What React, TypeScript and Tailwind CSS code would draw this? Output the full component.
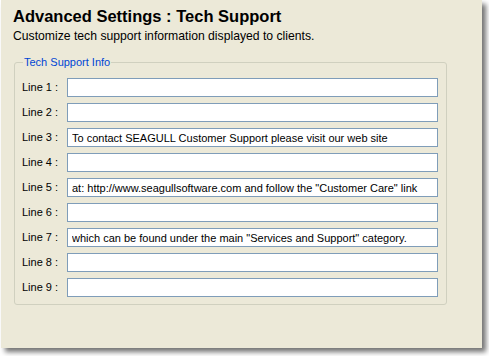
const lines = [
  "",
  "",
  "To contact SEAGULL Customer Support please visit our web site",
  "",
  'at: http://www.seagullsoftware.com and follow the "Customer Care" link',
  "",
  'which can be found under the main "Services and Support" category.',
  "",
  "",
];

export default function App() {
  return (
    <div className="w-[489px] h-[356px] bg-white">
      <div className="ml-px w-[481px] h-[348px] bg-[#ECE9D8] shadow-[4px_4px_5px_rgba(0,0,0,0.55)] pt-[6px] font-['Liberation_Sans',sans-serif] text-[11px] text-black">
        <div className="pl-[12px]">
          <div className="font-bold text-[16.5px] leading-[20px]">Advanced Settings : Tech Support</div>
          <div className="text-[12.2px] leading-[14px] mt-[3px]">Customize tech support information displayed to clients.</div>
        </div>
        <fieldset className="ml-[13px] w-[433px] mt-[13px] border border-[#D0D0BF] rounded-[3px] pl-[7px] pr-[7px] pb-[7px]">
          <legend className="ml-[1px] px-[1px] text-[#0046D5] leading-[12px]">Tech Support Info</legend>
          <div className="flex flex-col gap-[6px] mt-[10px]">
            {lines.map((t, i) => (
              <div key={i} className="flex items-center">
                <span className="w-[45px] leading-[19px]">Line {i + 1} :</span>
                <input
                  readOnly
                  value={t}
                  className="w-[371px] h-[19px] border border-[#7F9DB9] bg-white px-[4px] text-[11px] leading-[17px] outline-none font-['Liberation_Sans',sans-serif]"
                />
              </div>
            ))}
          </div>
        </fieldset>
      </div>
    </div>
  );
}
